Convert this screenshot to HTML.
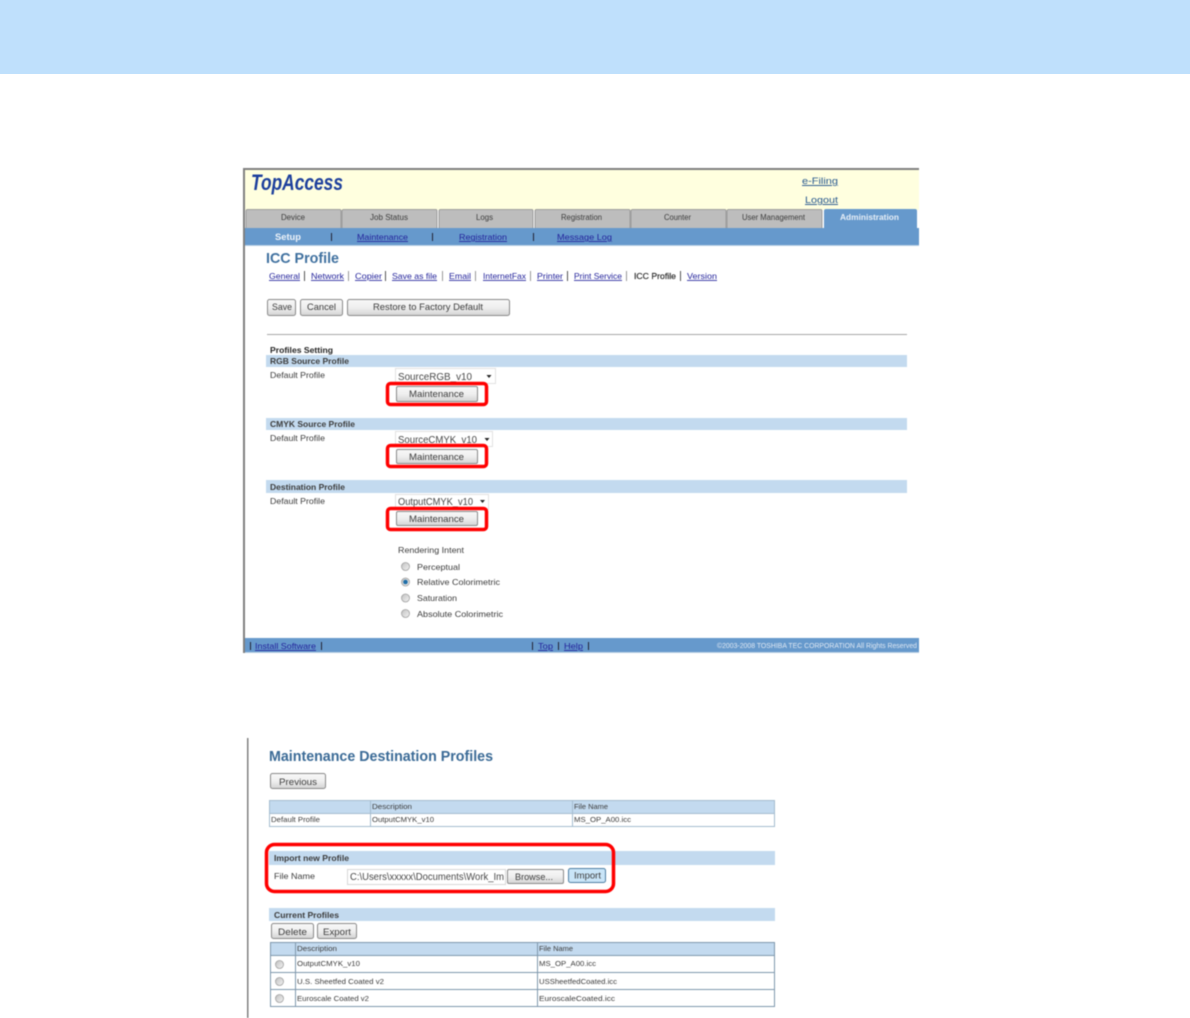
<!DOCTYPE html>
<html><head><meta charset="utf-8"><style>
html,body{margin:0;padding:0;background:#fff;width:1190px;height:1018px;overflow:hidden}
svg{display:block}
text{font-family:"Liberation Sans",sans-serif;font-size:8.5px;fill:#3c3c3c;white-space:pre}
.l{fill:#23239b;text-decoration:underline}
.b{font-weight:bold}
.btn{fill:url(#g);stroke:#8a8a8a;stroke-width:1}
.band{fill:#c3daef}
.sel{fill:#fff;stroke:#e2e2e2}
.red{fill:none;stroke:#f00;stroke-width:3.5}
.f{font-size:10px;fill:#484848}
.bt{font-size:9.5px;fill:#3c3c3c}
.cell{fill:#fff;stroke:#7f98ad;stroke-width:1}
.hd{fill:#c3daef;stroke:#7f98ad;stroke-width:1}
.cell1{fill:#fff;stroke:#a5bccf;stroke-width:1}
.hd1{fill:#c3daef;stroke:#a5bccf;stroke-width:1}
.tab{fill:#bdbdbd;stroke:#8d8d8d;stroke-width:.8}
.rad{fill:url(#r);stroke:#a0a0a0;stroke-width:.8}
</style></head><body>
<svg width="1190" height="1018" viewBox="0 0 1190 1018" xmlns="http://www.w3.org/2000/svg">
<defs>
<linearGradient id="g" x1="0" y1="0" x2="0" y2="1"><stop offset="0" stop-color="#f8f8f8"/><stop offset=".5" stop-color="#efefef"/><stop offset="1" stop-color="#d4d4d4"/></linearGradient>
<linearGradient id="r" x1="0" y1="0" x2="1" y2="1"><stop offset="0" stop-color="#c0c0c0"/><stop offset="1" stop-color="#f4f4f4"/></linearGradient>
</defs>
<rect x="0" y="0" width="1190" height="74" fill="#bfe0fc"/>

<g style="filter:blur(.4px)">
<!-- first screenshot -->
<rect x="243" y="168" width="676" height="2" fill="#808080"/>
<rect x="243" y="168" width="2" height="485" fill="#808080"/>
<rect x="245" y="170" width="674" height="40" fill="#ffffdf"/>
<text x="251" y="190" textLength="92" lengthAdjust="spacingAndGlyphs" style="font-size:22px;font-weight:bold;font-style:italic;fill:#1c3f9c">TopAccess</text>
<text x="802" y="184" textLength="36" lengthAdjust="spacingAndGlyphs" style="font-size:9.5px;fill:#28598f;text-decoration:underline">e-Filing</text>
<text x="805" y="203" textLength="33" lengthAdjust="spacingAndGlyphs" style="font-size:9.5px;fill:#28598f;text-decoration:underline">Logout</text>

<path class="tab" d="M246 229V211q0-1.500 1.500-1.500H340q1 0 1 1.500V229Z"/>
<path class="tab" d="M342 229V211q0-1.500 1.500-1.500H436q1 0 1 1.500V229Z"/>
<path class="tab" d="M439 229V211q0-1.500 1.500-1.500H532q1 0 1 1.500V229Z"/>
<path class="tab" d="M535 229V211q0-1.500 1.500-1.500H629q1 0 1 1.500V229Z"/>
<path class="tab" d="M631 229V211q0-1.500 1.500-1.500H725q1 0 1 1.500V229Z"/>
<path class="tab" d="M727 229V211q0-1.500 1.500-1.500H821q1 0 1 1.500V229Z"/>
<path d="M824 229V211q0-2 2-2H915q2 0 2 2V229Z" fill="#6699cc"/>
<rect x="245" y="228" width="674" height="17" fill="#6699cc"/>
<rect x="245" y="245" width="674" height="1" fill="#b8cfe3"/>

<text x="281" y="220" textLength="24" lengthAdjust="spacingAndGlyphs" style="font-size:8px">Device</text>
<text x="370" y="220" textLength="38" lengthAdjust="spacingAndGlyphs" style="font-size:8px">Job Status</text>
<text x="476" y="220" textLength="17" lengthAdjust="spacingAndGlyphs" style="font-size:8px">Logs</text>
<text x="561" y="220" textLength="41" lengthAdjust="spacingAndGlyphs" style="font-size:8px">Registration</text>
<text x="664" y="220" textLength="27" lengthAdjust="spacingAndGlyphs" style="font-size:8px">Counter</text>
<text x="742" y="220" textLength="63" lengthAdjust="spacingAndGlyphs" style="font-size:8px">User Management</text>
<text x="840" y="220" textLength="59" lengthAdjust="spacingAndGlyphs" class="b" style="font-size:8px;fill:#e8eff7">Administration</text>

<text x="275" y="240" textLength="26" lengthAdjust="spacingAndGlyphs" class="b" style="font-size:9px;fill:#eef3f9">Setup</text>
<rect x="331" y="233" width="1" height="8" fill="#223"/>
<text x="357" y="240" textLength="51" lengthAdjust="spacingAndGlyphs" class="l">Maintenance</text>
<rect x="432" y="233" width="1" height="8" fill="#223"/>
<text x="459" y="240" textLength="48" lengthAdjust="spacingAndGlyphs" class="l">Registration</text>
<rect x="533" y="233" width="1" height="8" fill="#223"/>
<text x="557" y="240" textLength="55" lengthAdjust="spacingAndGlyphs" class="l">Message Log</text>

<text x="266" y="263" textLength="73" lengthAdjust="spacingAndGlyphs" class="b" style="font-size:15px;fill:#3f709f">ICC Profile</text>

<text x="269" y="279" textLength="31" lengthAdjust="spacingAndGlyphs" class="l">General</text>
<rect x="304" y="271" width="1" height="10" fill="#555"/>
<text x="311" y="279" textLength="33" lengthAdjust="spacingAndGlyphs" class="l">Network</text>
<rect x="348" y="271" width="1" height="10" fill="#999"/>
<text x="355" y="279" textLength="27" lengthAdjust="spacingAndGlyphs" class="l">Copier</text>
<rect x="385" y="271" width="1" height="10" fill="#555"/>
<text x="392" y="279" textLength="45" lengthAdjust="spacingAndGlyphs" class="l">Save as file</text>
<rect x="442" y="271" width="1" height="10" fill="#999"/>
<text x="449" y="279" textLength="22" lengthAdjust="spacingAndGlyphs" class="l">Email</text>
<rect x="475" y="271" width="1" height="10" fill="#999"/>
<text x="483" y="279" textLength="43" lengthAdjust="spacingAndGlyphs" class="l">InternetFax</text>
<rect x="530" y="271" width="1" height="10" fill="#999"/>
<text x="537" y="279" textLength="26" lengthAdjust="spacingAndGlyphs" class="l">Printer</text>
<rect x="567" y="271" width="1" height="10" fill="#555"/>
<text x="574" y="279" textLength="48" lengthAdjust="spacingAndGlyphs" class="l">Print Service</text>
<rect x="626" y="271" width="1" height="10" fill="#999"/>
<text x="634" y="279" textLength="42" lengthAdjust="spacingAndGlyphs" style="fill:#222;stroke:#222;stroke-width:.15">ICC Profile</text>
<rect x="680" y="271" width="1" height="10" fill="#555"/>
<text x="687" y="279" textLength="30" lengthAdjust="spacingAndGlyphs" class="l">Version</text>

<rect class="btn" x="267.500" y="299.500" width="28" height="16" rx="2"/>
<text x="272" y="310" textLength="20" lengthAdjust="spacingAndGlyphs" class="bt">Save</text>
<rect class="btn" x="300.500" y="299.500" width="42" height="16" rx="2"/>
<text x="307" y="310" textLength="29" lengthAdjust="spacingAndGlyphs" class="bt">Cancel</text>
<rect class="btn" x="347.500" y="299.500" width="162" height="16" rx="2"/>
<text x="373" y="310" textLength="110" lengthAdjust="spacingAndGlyphs" class="bt">Restore to Factory Default</text>

<rect x="267" y="334" width="640" height="1" fill="#a8a8a8"/>

<text x="270" y="353" textLength="63" lengthAdjust="spacingAndGlyphs" style="font-size:8px;fill:#222;font-weight:bold">Profiles Setting</text>

<rect class="band" x="266" y="355" width="641" height="12"/>
<text x="270" y="364" textLength="79" lengthAdjust="spacingAndGlyphs" class="b">RGB Source Profile</text>
<text x="270" y="378" textLength="55" lengthAdjust="spacingAndGlyphs">Default Profile</text>
<rect class="sel" x="395.500" y="368.500" width="100" height="15"/>
<text x="398" y="380" textLength="74" lengthAdjust="spacingAndGlyphs" class="f">SourceRGB_v10</text>
<path d="M486.500 375h5l-2.500 3z" fill="#222"/>
<rect class="btn" x="396.500" y="386.500" width="81" height="15" rx="1.500"/>
<text x="409" y="397" textLength="55" lengthAdjust="spacingAndGlyphs" class="bt">Maintenance</text>
<rect class="red" x="387.500" y="383.500" width="99" height="21" rx="3"/>

<rect class="band" x="266" y="418" width="641" height="12"/>
<text x="270" y="427" textLength="85" lengthAdjust="spacingAndGlyphs" class="b">CMYK Source Profile</text>
<text x="270" y="441" textLength="55" lengthAdjust="spacingAndGlyphs">Default Profile</text>
<rect class="sel" x="395.500" y="431.500" width="97" height="15"/>
<text x="398" y="443" textLength="79" lengthAdjust="spacingAndGlyphs" class="f">SourceCMYK_v10</text>
<path d="M484.500 438h5l-2.500 3z" fill="#222"/>
<rect class="btn" x="396.500" y="449.500" width="81" height="14" rx="1.500"/>
<text x="409" y="460" textLength="55" lengthAdjust="spacingAndGlyphs" class="bt">Maintenance</text>
<rect class="red" x="387.500" y="445.500" width="99" height="21" rx="3"/>

<rect class="band" x="266" y="480" width="641" height="13"/>
<text x="270" y="490" textLength="75" lengthAdjust="spacingAndGlyphs" class="b">Destination Profile</text>
<text x="270" y="504" textLength="55" lengthAdjust="spacingAndGlyphs">Default Profile</text>
<rect class="sel" x="395.500" y="494.500" width="93" height="15"/>
<text x="398" y="505" textLength="75" lengthAdjust="spacingAndGlyphs" class="f">OutputCMYK_v10</text>
<path d="M480 500h5l-2.500 3z" fill="#222"/>
<rect class="btn" x="396.500" y="511.500" width="81" height="14" rx="1.500"/>
<text x="409" y="522" textLength="55" lengthAdjust="spacingAndGlyphs" class="bt">Maintenance</text>
<rect class="red" x="387.500" y="508.500" width="99" height="21" rx="3"/>

<text x="398" y="553" textLength="66" lengthAdjust="spacingAndGlyphs">Rendering Intent</text>
<circle class="rad" cx="405.500" cy="566.500" r="4"/>
<text x="417" y="570" textLength="43" lengthAdjust="spacingAndGlyphs">Perceptual</text>
<circle class="rad" cx="405.500" cy="582" r="4"/>
<circle cx="405.500" cy="582" r="2.300" fill="#1f6ea8"/>
<text x="417" y="585" textLength="83" lengthAdjust="spacingAndGlyphs">Relative Colorimetric</text>
<circle class="rad" cx="405.500" cy="598" r="4"/>
<text x="417" y="601" textLength="40" lengthAdjust="spacingAndGlyphs">Saturation</text>
<circle class="rad" cx="405.500" cy="613.500" r="4"/>
<text x="417" y="617" textLength="86" lengthAdjust="spacingAndGlyphs">Absolute Colorimetric</text>

<rect x="245" y="638" width="674" height="14" fill="#6699cc"/>
<rect x="245" y="652" width="674" height="1" fill="#b8cfe3"/>
<rect x="250" y="642" width="1" height="8" fill="#223"/>
<text x="255" y="649" textLength="61" lengthAdjust="spacingAndGlyphs" class="l">Install Software</text>
<rect x="321" y="642" width="1" height="8" fill="#223"/>
<rect x="532" y="642" width="1" height="8" fill="#223"/>
<text x="538" y="649" textLength="15" lengthAdjust="spacingAndGlyphs" class="l">Top</text>
<rect x="558" y="642" width="1" height="8" fill="#223"/>
<text x="564" y="649" textLength="19" lengthAdjust="spacingAndGlyphs" class="l">Help</text>
<rect x="588" y="642" width="1" height="8" fill="#223"/>
<text x="717" y="648" textLength="200" lengthAdjust="spacingAndGlyphs" style="font-size:7.500px;fill:#dfe8f3">©2003-2008 TOSHIBA TEC CORPORATION All Rights Reserved</text>

<!-- second screenshot -->
<rect x="247" y="738" width="1.500" height="280" fill="#808080"/>
<text x="269" y="761" textLength="224" lengthAdjust="spacingAndGlyphs" class="b" style="font-size:14.500px;fill:#3a6a96">Maintenance Destination Profiles</text>
<rect class="btn" x="270.500" y="773.500" width="55" height="15" rx="2"/>
<text x="279" y="785" textLength="38" lengthAdjust="spacingAndGlyphs" class="bt">Previous</text>

<rect class="hd1" x="269.500" y="800.500" width="505" height="13"/>
<rect class="cell1" x="269.500" y="813.500" width="505" height="13"/>
<path d="M370.500 800v27M572.500 800v27" stroke="#a5bccf" fill="none"/>
<text x="372" y="809" textLength="40" lengthAdjust="spacingAndGlyphs" style="font-size:7.500px">Description</text>
<text x="574" y="809" textLength="34" lengthAdjust="spacingAndGlyphs" style="font-size:7.500px">File Name</text>
<text x="271" y="822" textLength="49" lengthAdjust="spacingAndGlyphs" style="font-size:7.500px">Default Profile</text>
<text x="372" y="822" textLength="62" lengthAdjust="spacingAndGlyphs" style="font-size:7.500px">OutputCMYK_v10</text>
<text x="574" y="822" textLength="57" lengthAdjust="spacingAndGlyphs" style="font-size:7.500px">MS_OP_A00.icc</text>

<rect class="band" x="269" y="851" width="506" height="14"/>
<text x="274" y="861" textLength="75" lengthAdjust="spacingAndGlyphs" class="b">Import new Profile</text>
<text x="274" y="879" textLength="41" lengthAdjust="spacingAndGlyphs">File Name</text>
<rect x="347.500" y="869.500" width="158" height="15" fill="#fff" stroke="#d8d8d8"/>
<text x="350" y="880" textLength="154" lengthAdjust="spacingAndGlyphs" class="f">C:\Users\xxxxx\Documents\Work_Im</text>
<rect class="btn" x="507.500" y="869.500" width="56" height="14" rx="1.500"/>
<text x="515" y="880" textLength="38" lengthAdjust="spacingAndGlyphs" class="bt">Browse...</text>
<rect x="568.500" y="868.500" width="37" height="14" rx="2" fill="#c9e5f8" stroke="#4d7fa3"/>
<text x="574" y="878.500" textLength="27" lengthAdjust="spacingAndGlyphs" class="bt">Import</text>
<rect class="red" x="266.500" y="844.500" width="347" height="47" rx="8"/>

<rect class="band" x="269" y="908" width="506" height="13"/>
<text x="274" y="918" textLength="65" lengthAdjust="spacingAndGlyphs" class="b">Current Profiles</text>
<rect class="btn" x="271.500" y="923.500" width="42" height="15" rx="2"/>
<text x="278" y="935" textLength="29" lengthAdjust="spacingAndGlyphs" class="bt">Delete</text>
<rect class="btn" x="317.500" y="923.500" width="39" height="15" rx="2"/>
<text x="323" y="935" textLength="28" lengthAdjust="spacingAndGlyphs" class="bt">Export</text>

<rect class="hd" x="270.500" y="942.500" width="504" height="13"/>
<rect class="cell" x="270.500" y="955.500" width="504" height="17"/>
<rect class="cell" x="270.500" y="972.500" width="504" height="17"/>
<rect class="cell" x="270.500" y="989.500" width="504" height="17"/>
<path d="M295.500 942v65M537.500 942v65" stroke="#7f98ad" fill="none"/>
<text x="297" y="951" textLength="40" lengthAdjust="spacingAndGlyphs" style="font-size:7.500px">Description</text>
<text x="539" y="951" textLength="34" lengthAdjust="spacingAndGlyphs" style="font-size:7.500px">File Name</text>
<circle class="rad" cx="279.500" cy="964.500" r="4"/>
<circle class="rad" cx="279.500" cy="981.500" r="4"/>
<circle class="rad" cx="279.500" cy="998.500" r="4"/>
<text x="297" y="966" textLength="63" lengthAdjust="spacingAndGlyphs" style="font-size:7.500px">OutputCMYK_v10</text>
<text x="539" y="966" textLength="57" lengthAdjust="spacingAndGlyphs" style="font-size:7.500px">MS_OP_A00.icc</text>
<text x="297" y="984" textLength="87" lengthAdjust="spacingAndGlyphs" style="font-size:7.500px">U.S. Sheetfed Coated v2</text>
<text x="539" y="984" textLength="78" lengthAdjust="spacingAndGlyphs" style="font-size:7.500px">USSheetfedCoated.icc</text>
<text x="297" y="1001" textLength="72" lengthAdjust="spacingAndGlyphs" style="font-size:7.500px">Euroscale Coated v2</text>
<text x="539" y="1001" textLength="76" lengthAdjust="spacingAndGlyphs" style="font-size:7.500px">EuroscaleCoated.icc</text>
</g>
</svg>
</body></html>
